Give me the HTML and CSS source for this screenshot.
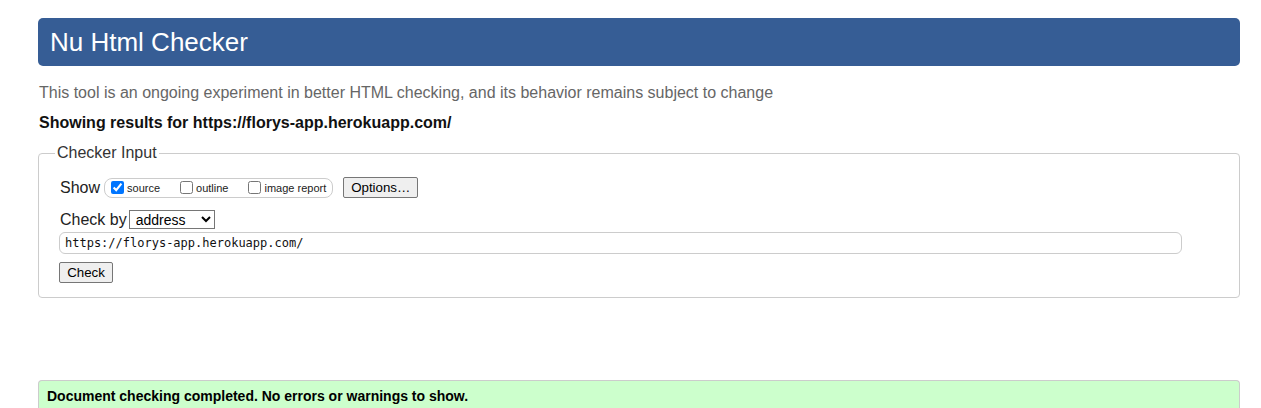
FILE: index.html
```html
<!DOCTYPE html>
<html lang="en">
<head>
<meta charset="utf-8">
<title>Nu Html Checker</title>
<link rel="stylesheet" href="styles.css">
</head>
<body>
<div class="page">
  <h1 class="title">Nu Html Checker</h1>
  <p class="intro">This tool is an ongoing experiment in better HTML checking, and its behavior remains subject to change</p>
  <p class="showing">Showing results for https://florys-app.herokuapp.com/</p>
  <fieldset class="input-box">
    <legend class="legend">Checker Input</legend>
    <div class="row show-row">
      <span class="label">Show</span>
      <div class="opts">
        <label class="opt"><input type="checkbox" checked><span>source</span></label>
        <label class="opt"><input type="checkbox"><span>outline</span></label>
        <label class="opt"><input type="checkbox"><span>image report</span></label>
      </div>
      <button class="btn options">Options…</button>
    </div>
    <div class="row by-row">
      <span class="label">Check by</span>
      <select class="sel"><option>address</option></select>
    </div>
    <div class="url">https://florys-app.herokuapp.com/</div>
    <button class="btn check">Check</button>
  </fieldset>
  <div class="result">Document checking completed. No errors or warnings to show.</div>
</div>
</body>
</html>
```
FILE: styles.css
```css
html, body {
  margin: 0;
  padding: 0;
  background: #fff;
}
body {
  font-family: "Liberation Sans", Arial, sans-serif;
  color: #000;
  overflow: hidden;
}
.page {
  margin-left: 38px;
  width: 1202px;
  padding-top: 18px;
}
.title {
  margin: 0;
  height: 48px;
  line-height: 48px;
  padding: 0 12px;
  background: #365d95;
  color: #fff;
  font-size: 26px;
  font-weight: normal;
  border-radius: 5px;
}
.intro {
  margin: 18px 0 0 1px;
  font-size: 16px;
  line-height: 18px;
  color: #666;
}
.showing {
  margin: 12px 0 0 1px;
  font-size: 16px;
  line-height: 18px;
  font-weight: bold;
  color: #111;
}
.input-box {
  margin: 12px 0 0 0;
  border: 1px solid #ccc;
  border-radius: 4px;
  padding: 15px 20px 14px 20px;
  min-width: 0;
}
.legend {
  font-size: 16px;
  color: #333;
  padding: 0 2px;
  margin-left: -4px;
  line-height: 18px;
}
.row {
  display: flex;
  align-items: center;
}
.label {
  font-size: 16px;
  color: #222;
  margin-left: 1px;
}
.show-row {
  height: 21px;
}
.opts {
  display: flex;
  align-items: center;
  margin-left: 4px;
  height: 18px;
  border: 1px solid #ccc;
  border-radius: 8px;
  padding: 0 6px 0 6px;
  gap: 20px;
}
.opt {
  display: flex;
  align-items: center;
  font-size: 11px;
  color: #222;
}
.opt input {
  margin: 0 3px 0 0;
  width: 13px;
  height: 13px;
}
.btn {
  font-family: "Liberation Sans", Arial, sans-serif;
  font-size: 13.3px;
  background: #efefef;
  border: 1px solid #767676;
  border-radius: 2px;
  color: #000;
  padding: 1px 6px;
  height: 21px;
}
.options {
  margin-left: 10px;
  width: 75px;
  padding: 0;
}
.by-row {
  margin-top: 12px;
  height: 19px;
}
.sel {
  margin-left: 2px;
  height: 19px;
  width: 86px;
  font-family: "Liberation Sans", Arial, sans-serif;
  font-size: 14px;
  border: 1px solid #767676;
  border-radius: 0;
  background: #fff;
  color: #000;
  padding: 0 2px;
}
.url {
  margin-top: 3px;
  width: 1123px;
  box-sizing: border-box;
  height: 22px;
  line-height: 20px;
  border: 1px solid #ccc;
  border-radius: 6px;
  padding: 0 5px;
  font-family: "DejaVu Sans Mono", "Liberation Mono", monospace;
  font-size: 12px;
  color: #111;
}
.check {
  display: block;
  margin-top: 8px;
  width: 54px;
  padding: 0;
}
.result {
  margin-top: 82px;
  background: #ccffcc;
  border: 1px solid #ccc;
  border-bottom: none;
  border-radius: 4px 4px 0 0;
  padding: 7px 8px 8px 8px;
  font-size: 14px;
  font-weight: bold;
  color: #000;
  line-height: 16px;
}
```
